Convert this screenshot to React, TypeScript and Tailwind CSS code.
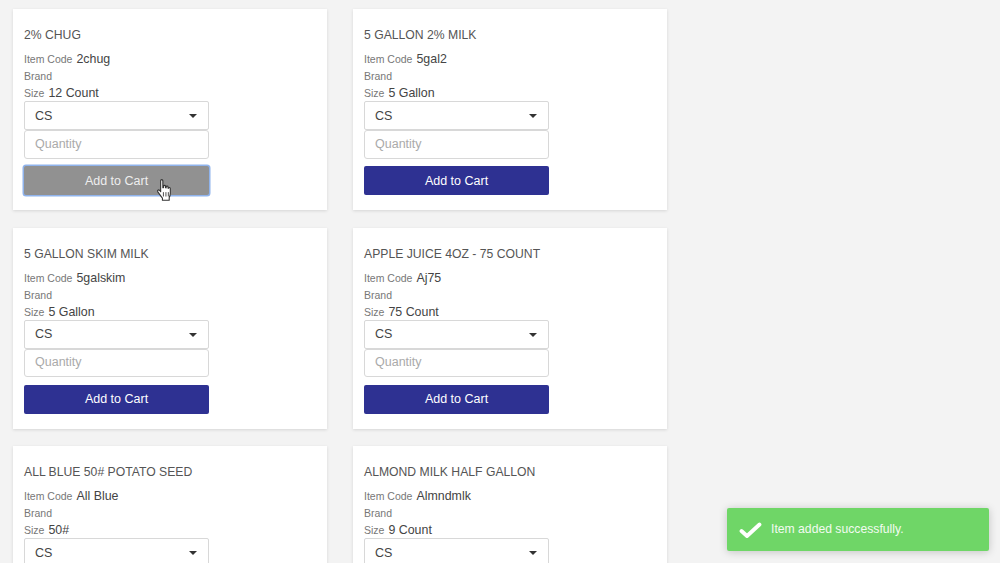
const items = [
  { name: "2% CHUG", code: "2chug", size: "12 Count", active: true },
  { name: "5 GALLON 2% MILK", code: "5gal2", size: "5 Gallon" },
  { name: "5 GALLON SKIM MILK", code: "5galskim", size: "5 Gallon" },
  { name: "APPLE JUICE 4OZ - 75 COUNT", code: "Aj75", size: "75 Count" },
  { name: "ALL BLUE 50# POTATO SEED", code: "All Blue", size: "50#" },
  { name: "ALMOND MILK HALF GALLON", code: "Almndmlk", size: "9 Count" },
];

function HandCursor() {
  return (
    <svg className="absolute left-[132px] top-[13px]" width="17" height="23" viewBox="0 0 15 21">
      <path
        d="M4 1.5c0-1.2 2-1.2 2 0V8l.6-.1V6.6c0-1 1.8-1 1.8 0V8l.6.1V7.2c0-1 1.7-1 1.7 0v1.2l.5.1c0-1 1.6-.9 1.6.1v4.6c0 1.5-.4 2.5-1 3.6v2.6H5.6v-2c-1-1.2-2.4-3-4.2-5.6-.8-1.2.6-2.4 1.6-1.4L4 11.6z"
        fill="#fff"
        stroke="#333"
        strokeWidth="1"
        strokeLinejoin="round"
      />
      <path d="M6.5 12v4M8.8 12v4M11 12v4" stroke="#333" strokeWidth="0.8" />
    </svg>
  );
}

function ItemCard({ item }: { item: (typeof items)[number] }) {
  return (
    <div className="h-[201px] bg-white pl-[11px] pr-[11px] pt-[19px] shadow-[0_1px_3px_rgba(0,0,0,0.12)]">
      <h3 className="h-[14px] text-[12.2px] leading-[14px] text-[#555]">{item.name}</h3>
      <div className="mt-[9px] flex h-[16px] items-baseline gap-[4px] leading-[16px]">
        <span className="text-[10.5px] text-[#777]">Item Code</span>
        <span className="text-[12.4px] text-[#444]">{item.code}</span>
      </div>
      <div className="mt-[1px] h-[17px] text-[10.5px] leading-[17px] text-[#777]">Brand</div>
      <div className="flex h-[16px] items-baseline gap-[4px] leading-[17px]">
        <span className="text-[10.5px] text-[#777]">Size</span>
        <span className="text-[12.4px] text-[#444]">{item.size}</span>
      </div>
      <div className="flex h-[29px] w-[185px] items-center justify-between rounded-[2px] border border-[#d8d8d8] pl-[10px] pr-[11px] pt-[1px] text-[12.5px] text-[#444]">
        <span>CS</span>
        <span className="h-0 w-0 border-x-[4px] border-t-[4px] border-x-transparent border-t-[#333]" />
      </div>
      <div className="flex h-[28.5px] w-[185px] items-center rounded-[3px] border border-[#d8d8d8] pl-[10px] text-[12.5px] text-[#aaa]">
        Quantity
      </div>
      <div className="relative mt-[7.5px] w-[185px]">
        <button
          className={
            item.active
              ? "flex h-[29px] w-[185px] items-center justify-center rounded-[2px] bg-[#919191] pt-[1px] text-[12.5px] text-[#eee] shadow-[0_0_0_1.5px_#8fb3ec]"
              : "flex h-[29px] w-[185px] items-center justify-center rounded-[2px] bg-[#2e3192] pt-[1px] text-[12.5px] text-white"
          }
        >
          Add to Cart
        </button>
        {item.active && <HandCursor />}
      </div>
    </div>
  );
}

export default function App() {
  return (
    <div className="relative h-[563px] w-[1000px] overflow-hidden bg-[#f3f3f3] font-['Liberation_Sans',Arial,sans-serif]">
      <div className="grid grid-cols-[314px_314px] gap-x-[26px] gap-y-[17.5px] pl-[13px] pt-[9px]">
        {items.map((item) => (
          <ItemCard key={item.code} item={item} />
        ))}
      </div>
      <div className="absolute left-[727px] top-[508px] flex h-[43px] w-[262px] items-center rounded-[2px] bg-[#6fd667] pl-[12px] text-[12.2px] text-[#f2fbf1] shadow-[0_1px_8px_rgba(0,0,0,0.2)]">
        <svg width="23" height="16" viewBox="0 0 23 16">
          <path d="M2.5 9l5.5 5L20.5 2.5" fill="none" stroke="#fff" strokeWidth="3.8" strokeLinecap="round" strokeLinejoin="round" />
        </svg>
        <span className="ml-[9px]">Item added successfully.</span>
      </div>
    </div>
  );
}
